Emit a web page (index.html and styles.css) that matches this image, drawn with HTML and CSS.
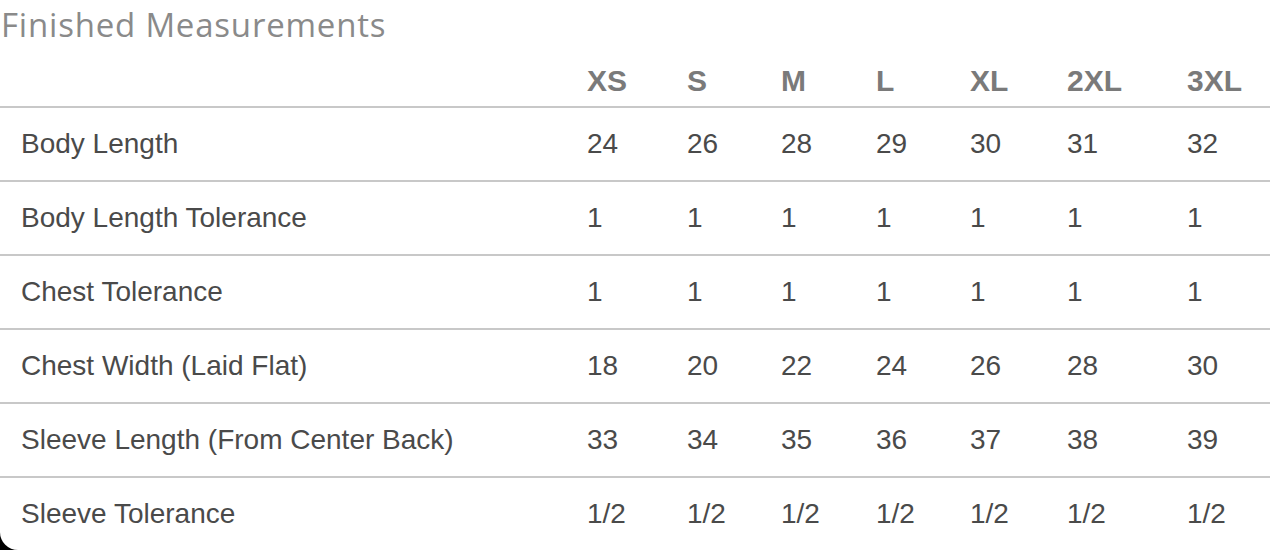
FILE: index.html
```html
<!DOCTYPE html>
<html lang="en">
<head>
<meta charset="utf-8">
<title>Finished Measurements</title>
<link rel="stylesheet" href="styles.css">
</head>
<body>
<div class="panel">
  <h2 class="title">Finished Measurements</h2>
  <div class="table">
    <div class="row head">
      <div class="cell label"></div>
      <div class="cell">XS</div><div class="cell">S</div><div class="cell">M</div><div class="cell">L</div><div class="cell">XL</div><div class="cell">2XL</div><div class="cell">3XL</div>
    </div>
    <div class="row">
      <div class="cell label">Body Length</div>
      <div class="cell">24</div><div class="cell">26</div><div class="cell">28</div><div class="cell">29</div><div class="cell">30</div><div class="cell">31</div><div class="cell">32</div>
    </div>
    <div class="row">
      <div class="cell label">Body Length Tolerance</div>
      <div class="cell">1</div><div class="cell">1</div><div class="cell">1</div><div class="cell">1</div><div class="cell">1</div><div class="cell">1</div><div class="cell">1</div>
    </div>
    <div class="row">
      <div class="cell label">Chest Tolerance</div>
      <div class="cell">1</div><div class="cell">1</div><div class="cell">1</div><div class="cell">1</div><div class="cell">1</div><div class="cell">1</div><div class="cell">1</div>
    </div>
    <div class="row">
      <div class="cell label">Chest Width (Laid Flat)</div>
      <div class="cell">18</div><div class="cell">20</div><div class="cell">22</div><div class="cell">24</div><div class="cell">26</div><div class="cell">28</div><div class="cell">30</div>
    </div>
    <div class="row">
      <div class="cell label">Sleeve Length (From Center Back)</div>
      <div class="cell">33</div><div class="cell">34</div><div class="cell">35</div><div class="cell">36</div><div class="cell">37</div><div class="cell">38</div><div class="cell">39</div>
    </div>
    <div class="row">
      <div class="cell label">Sleeve Tolerance</div>
      <div class="cell">1/2</div><div class="cell">1/2</div><div class="cell">1/2</div><div class="cell">1/2</div><div class="cell">1/2</div><div class="cell">1/2</div><div class="cell">1/2</div>
    </div>
  </div>
</div>
</body>
</html>
```
FILE: styles.css
```css
html, body {
  margin: 0;
  padding: 0;
  background: #000;
  height: 100%;
  overflow: hidden;
}
.panel {
  background: #fff;
  height: 100%;
  border-bottom-left-radius: 18px;
  overflow: hidden;
}
.title {
  margin: 0;
  padding: 0 0 0 1px;
  height: 48px;
  line-height: 50px;
  font-family: "Open Sans", "Noto Sans", sans-serif;
  font-weight: 500;
  font-size: 33px;
  letter-spacing: 0.8px;
  color: #8a8a8a;
}
.table {
  font-family: "Liberation Sans", Arial, sans-serif;
}
.row {
  display: grid;
  grid-template-columns: 567px 100px 94px 95px 94px 97px 120px 103px;
  align-items: center;
  height: 72px;
  border-bottom: 2px solid #c8c8c8;
  font-size: 28px;
  line-height: 32px;
  color: #4a4a4a;
}
.row.head {
  height: 58px;
  align-items: start;
  font-size: 30px;
  font-weight: 700;
  line-height: 34px;
  color: #7a7a7a;
}
.row.head .cell {
  padding-top: 16px;
}
.cell {
  padding-left: 20px;
  white-space: nowrap;
}
.cell.label {
  padding-left: 21px;
}
```
